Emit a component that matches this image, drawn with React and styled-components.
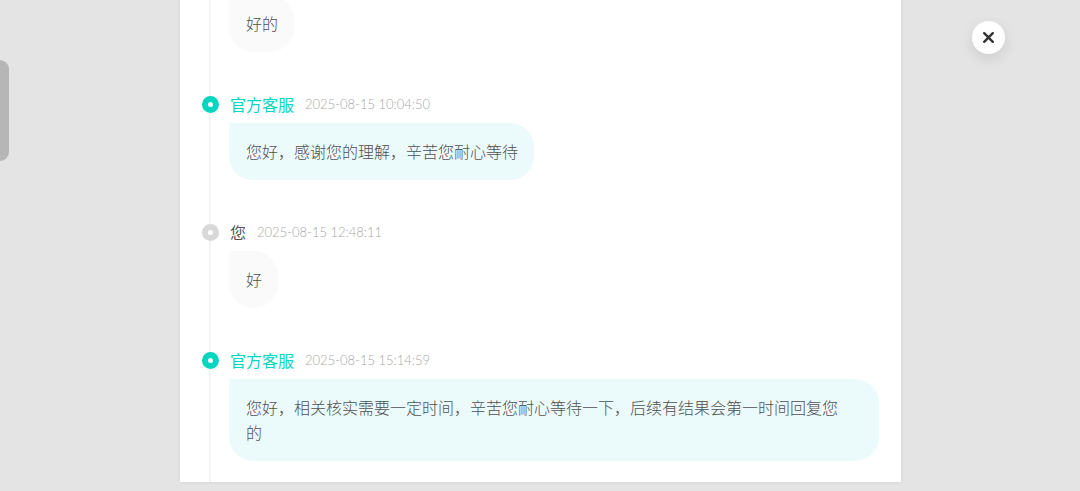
import React from "react";
import styled, { createGlobalStyle } from "styled-components";

const GlobalStyle = createGlobalStyle`
  * {
    box-sizing: border-box;
  }
  body {
    margin: 0;
    background: #e4e4e4;
    font-family: "Noto Sans CJK SC", sans-serif;
  }
`;

const Page = styled.div`
  display: flex;
  height: 100vh;
  padding: 0 179px 9px 180px;
  overflow: hidden;
`;

// the newest message stays at the bottom, older ones run off the top
const Panel = styled.main`
  display: flex;
  flex: 1;
  min-width: 0;
  flex-direction: column;
  justify-content: flex-end;
  overflow: hidden;
  background: #fff;
  box-shadow: 0 0 4px rgba(0, 0, 0, 0.08);
`;

const Timeline = styled.ul`
  margin: 0 22px 0 29px;
  padding: 0 0 21px;
  list-style: none;
  border-left: 2px solid #f5f5f5;
`;

const Item = styled.li`
  padding-left: 18px;

  + li {
    margin-top: 40px;
  }
`;

const Header = styled.div`
  display: flex;
  align-items: center;
  gap: 11px;
  height: 24px;
  margin: 0 0 7px -27px;
`;

const Dot = styled.span`
  width: 17px;
  height: 17px;
  border: 6px solid ${(props) => (props.$official ? "#06d6c0" : "#d8d8d8")};
  border-radius: 50%;
  background: #fff;
`;

const Name = styled.span`
  font-size: 16px;
  line-height: 24px;
  color: ${(props) => (props.$official ? "#06d6c0" : "#555")};
`;

const Time = styled.time`
  font-family: Lato, "Liberation Sans", sans-serif;
  font-size: 13px;
  font-weight: 300;
  line-height: 24px;
  color: #a8a8a8;
`;

const Bubble = styled.p`
  width: ${(props) => (props.$wide ? "100%" : "fit-content")};
  margin: 0;
  padding: 16px ${(props) => (props.$wide ? "32px" : "16px")} 16px 17px;
  border-radius: 0 24px 24px 24px;
  background: ${(props) => (props.$official ? "#ebfafb" : "#fafafa")};
  color: #505050;
  font-size: 16px;
  font-weight: 300;
  line-height: 25px;
`;

const Handle = styled.div`
  position: fixed;
  top: 60px;
  left: 0;
  width: 9px;
  height: 101px;
  border-radius: 0 9px 9px 0;
  background: #b6b6b6;
`;

const CloseButton = styled.button`
  position: fixed;
  top: 21px;
  right: 75px;
  display: grid;
  place-items: center;
  width: 33px;
  height: 33px;
  padding: 0;
  border: 0;
  border-radius: 50%;
  background: #fff;
  box-shadow: 0 5px 14px rgba(0, 0, 0, 0.1);
  cursor: pointer;
`;

const messages = [
  { id: 1, text: "好的" },
  {
    id: 2,
    official: true,
    name: "官方客服",
    time: "2025-08-15 10:04:50",
    text: "您好，感谢您的理解，辛苦您耐心等待"
  },
  { id: 3, name: "您", time: "2025-08-15 12:48:11", text: "好" },
  {
    id: 4,
    official: true,
    wide: true,
    name: "官方客服",
    time: "2025-08-15 15:14:59",
    text:
      "您好，相关核实需要一定时间，辛苦您耐心等待一下，后续有结果会第一时间回复您的"
  }
];

function Message(props) {
  const { official, wide, name, time, text } = props;
  return (
    <Item>
      {name && (
        <Header>
          <Dot $official={official} />
          <Name $official={official}>{name}</Name>
          <Time>{time}</Time>
        </Header>
      )}
      <Bubble $official={official} $wide={wide}>
        {text}
      </Bubble>
    </Item>
  );
}

function App() {
  return (
    <>
      <GlobalStyle />
      <Page>
        <Panel>
          <Timeline>
            {messages.map(({ id, ...message }) => (
              <Message key={id} {...message} />
            ))}
          </Timeline>
        </Panel>
      </Page>
      <Handle />
      <CloseButton type="button" aria-label="关闭">
        <svg width="13" height="13" viewBox="0 0 13 13" aria-hidden="true">
          <path
            d="M2.2 2.2 10.8 10.8M10.8 2.2 2.2 10.8"
            fill="none"
            stroke="#333"
            strokeWidth="2.4"
            strokeLinecap="round"
          />
        </svg>
      </CloseButton>
    </>
  );
}

export default App;
